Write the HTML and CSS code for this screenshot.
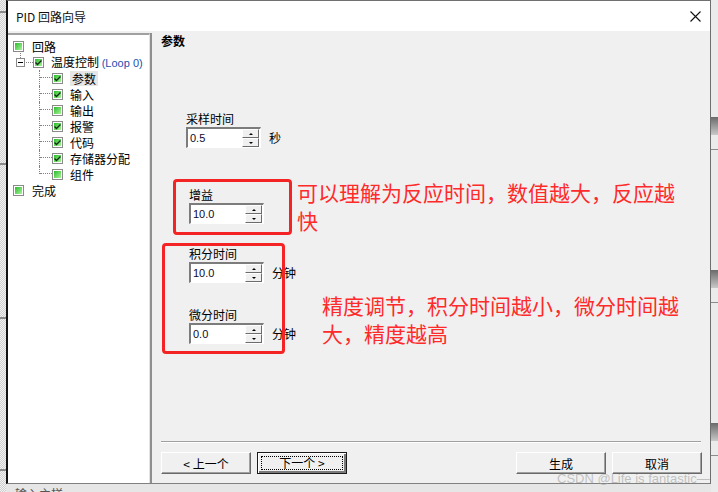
FILE: index.html
```html
<!DOCTYPE html>
<html lang="zh-CN">
<head>
    <meta charset="UTF-8">
    <title>PID 回路向导</title>
    <link rel="stylesheet" href="styles.css">
</head>
<body>
    <div class="desk">
        <!-- left screen edge -->
        <div class="edge-left">
            <i class="mark m1"></i>
            <i class="mark m2"></i>
            <i class="mark m3"></i>
            <i class="mark m4"></i>
        </div>

        <div class="main">
            <div class="window">
                <div class="titlebar">
                    <span class="title">PID 回路向导</span>
                    <svg class="close" width="11" height="11" viewBox="0 0 11 11">
                        <path d="M0.5 0.5 L10.5 10.5 M10.5 0.5 L0.5 10.5" stroke="#111" stroke-width="1.1" fill="none"/>
                    </svg>
                </div>

                <div class="body">
                    <!-- tree -->
                    <div class="tree">
                        <div class="row">
                            <span class="cb"></span><span class="txt">回路</span>
                        </div>
                        <div class="row lvl1">
                            <span class="exp"></span><span class="dash"></span>
                            <span class="cb on"><svg width="7" height="7" viewBox="0 0 7 7"><path d="M0.5 3.5 L2.5 5.5 L6.5 1.5" stroke="#143014" stroke-width="1.4" fill="none"/></svg></span>
                            <span class="txt">温度控制 <span class="loop">(Loop 0)</span></span>
                        </div>
                        <div class="row lvl2">
                            <span class="elbow"></span>
                            <span class="cb on"><svg width="7" height="7" viewBox="0 0 7 7"><path d="M0.5 3.5 L2.5 5.5 L6.5 1.5" stroke="#143014" stroke-width="1.4" fill="none"/></svg></span>
                            <span class="txt sel">参数</span>
                        </div>
                        <div class="row lvl2">
                            <span class="elbow"></span>
                            <span class="cb on"><svg width="7" height="7" viewBox="0 0 7 7"><path d="M0.5 3.5 L2.5 5.5 L6.5 1.5" stroke="#143014" stroke-width="1.4" fill="none"/></svg></span>
                            <span class="txt">输入</span>
                        </div>
                        <div class="row lvl2">
                            <span class="elbow"></span>
                            <span class="cb"></span>
                            <span class="txt">输出</span>
                        </div>
                        <div class="row lvl2">
                            <span class="elbow"></span>
                            <span class="cb on"><svg width="7" height="7" viewBox="0 0 7 7"><path d="M0.5 3.5 L2.5 5.5 L6.5 1.5" stroke="#143014" stroke-width="1.4" fill="none"/></svg></span>
                            <span class="txt">报警</span>
                        </div>
                        <div class="row lvl2">
                            <span class="elbow"></span>
                            <span class="cb on"><svg width="7" height="7" viewBox="0 0 7 7"><path d="M0.5 3.5 L2.5 5.5 L6.5 1.5" stroke="#143014" stroke-width="1.4" fill="none"/></svg></span>
                            <span class="txt">代码</span>
                        </div>
                        <div class="row lvl2">
                            <span class="elbow"></span>
                            <span class="cb on"><svg width="7" height="7" viewBox="0 0 7 7"><path d="M0.5 3.5 L2.5 5.5 L6.5 1.5" stroke="#143014" stroke-width="1.4" fill="none"/></svg></span>
                            <span class="txt">存储器分配</span>
                        </div>
                        <div class="row lvl2">
                            <span class="elbow last"></span>
                            <span class="cb"></span>
                            <span class="txt">组件</span>
                        </div>
                        <div class="row">
                            <span class="cb"></span><span class="txt">完成</span>
                        </div>
                    </div>

                    <!-- page -->
                    <div class="panel">
                        <div class="heading">参数</div>

                        <div class="fields">
                            <div class="field first">
                                <div class="label">采样时间</div>
                                <div class="line">
                                    <div class="spin">
                                        <span class="value">0.5</span>
                                        <span class="arrows"><b class="up"></b><b class="down"></b></span>
                                    </div>
                                    <span class="unit">秒</span>
                                </div>
                            </div>
                            <div class="field gain">
                                <div class="label">增益</div>
                                <div class="line">
                                    <div class="spin">
                                        <span class="value">10.0</span>
                                        <span class="arrows"><b class="up"></b><b class="down"></b></span>
                                    </div>
                                </div>
                            </div>
                            <div class="field integ">
                                <div class="label">积分时间</div>
                                <div class="line">
                                    <div class="spin">
                                        <span class="value">10.0</span>
                                        <span class="arrows"><b class="up"></b><b class="down"></b></span>
                                    </div>
                                    <span class="unit">分钟</span>
                                </div>
                            </div>
                            <div class="field deriv">
                                <div class="label">微分时间</div>
                                <div class="line">
                                    <div class="spin">
                                        <span class="value">0.0</span>
                                        <span class="arrows"><b class="up"></b><b class="down"></b></span>
                                    </div>
                                    <span class="unit">分钟</span>
                                </div>
                            </div>
                        </div>

                        <div class="sep"></div>
                        <div class="buttons">
                            <button class="btn">&lt; 上一个</button>
                            <button class="btn default"><span>下一个 &gt;</span></button>
                            <span class="grow"></span>
                            <button class="btn">生成</button>
                            <button class="btn">取消</button>
                        </div>

                        <!-- red annotations drawn over the dialog -->
                        <div class="note-box nb1"></div>
                        <div class="note-box nb2"></div>
                        <div class="note nt1">可以理解为反应时间，数值越大，反应越<br>快</div>
                        <div class="note nt2">精度调节，积分时间越小，微分时间越<br>大，精度越高</div>
                    </div>
                </div>
            </div>
            <div class="under">输入主样</div>
        </div>

        <!-- right screen edge -->
        <div class="edge-right">
            <i class="knob k1"></i><i class="rule"></i>
            <i class="knob k2"></i><i class="rule"></i>
            <i class="knob k3"></i><i class="rule"></i>
        </div>

        <div class="watermark">CSDN @Life is fantastic—</div>
    </div>
</body>
</html>
```

FILE: styles.css
```css
/* base */
body {
    margin: 0;
    font-family: "Noto Sans CJK SC", "Liberation Sans", sans-serif;
    font-size: 12px;
    color: #000;
}

.desk {
    position: relative;
    width: 718px;
    height: 492px;
    overflow: hidden;
    display: flex;
    background: #e6e6e6;
}

/* screen edges */
.edge-left {
    position: relative;
    width: 6px;
    flex: none;
    background: repeating-conic-gradient(#cfcfcf 0 25%, #f2f2f2 0 50%) 0 0 / 2px 2px;
}

.mark {
    position: absolute;
    left: 0;
    width: 6px;
    height: 2px;
    background: #8a8a8a;
}
.m1 { top: 11px; }
.m2 { top: 163px; }
.m3 { top: 317px; }
.m4 { top: 469px; }

.edge-right {
    width: 7px;
    flex: none;
    display: flex;
    flex-direction: column;
    background: #ebebeb;
}

.knob {
    height: 18px;
    background: linear-gradient(#6a6a6a, #c9c9c9);
}
.k1 { margin-top: 117px; }
.k2 { margin-top: 120px; }
.k3 { margin-top: 120px; }

.rule {
    height: 1px;
    margin-top: 14px;
    background: #8c8c8c;
}

.main {
    width: 705px;
    flex: none;
}

/* dialog */
.window {
    height: 482px;
    border-top: 1px solid #707070;
    border-bottom: 1px solid #808080;
    border-left: 2px solid #111;
    border-right: 1px solid #6e6e6e;
    background: #f0f0f0;
    display: flex;
    flex-direction: column;
}

.titlebar {
    height: 30px;
    flex: none;
    background: #fff;
    display: flex;
    align-items: center;
    justify-content: space-between;
    padding: 0 9px 0 8px;
}

.title {
    font-size: 12px;
    color: #111;
}

.close {
    display: block;
}

.body {
    flex: 1;
    display: flex;
    min-height: 0;
}

/* tree */
.tree {
    width: 141px;
    margin-top: 2px;
    padding-top: 3px;
    background: #fff;
    border-top: 2px solid #a0a0a0;
    border-right: 1px solid #e3e3e3;
    box-shadow: 2px 0 0 #8f8f8f;
    margin-right: 2px;
}

.row {
    height: 16px;
    display: flex;
    align-items: center;
    padding-left: 5px;
    white-space: nowrap;
}

.cb {
    width: 11px;
    height: 11px;
    box-sizing: border-box;
    border: 1px solid #8a8a8a;
    padding: 1px;
    flex: none;
    background: linear-gradient(135deg, #2cbc2c, #a8f29a) content-box, #fff;
    display: flex;
}

.cb svg {
    display: block;
}

.txt {
    margin-left: 8px;
    line-height: 15px;
}

.row.lvl1 {
    padding-left: 8px;
}

.row.lvl1 .txt,
.row.lvl2 .txt {
    margin-left: 7px;
}

.loop {
    font-family: "Liberation Sans", sans-serif;
    font-size: 11px;
    color: #1d4fae;
}

.exp {
    position: relative;
    width: 9px;
    height: 9px;
    box-sizing: border-box;
    border: 1px solid #8a8a8a;
    background: #fff;
    flex: none;
}

.exp::before {
    content: "";
    position: absolute;
    left: 3px;
    top: -6px;
    height: 5px;
    border-left: 1px dotted #808080;
}

.exp::after {
    content: "";
    position: absolute;
    left: 1px;
    top: 3px;
    width: 5px;
    height: 1px;
    background: #000;
}

.dash {
    width: 7px;
    margin-left: 1px;
    border-top: 1px dotted #808080;
    flex: none;
}

.row.lvl2 {
    padding-left: 31px;
    align-items: stretch;
}

.row.lvl2 .cb,
.row.lvl2 .txt {
    align-self: center;
}

.elbow {
    position: relative;
    width: 13px;
    flex: none;
    border-left: 1px dotted #808080;
    box-sizing: border-box;
}

.elbow.last {
    height: 8px;
}

.elbow::after {
    content: "";
    position: absolute;
    left: 0;
    top: 7px;
    width: 12px;
    border-top: 1px dotted #808080;
}

.txt.sel {
    background: #e6e6e6;
    padding: 0 2px;
    margin-left: 5px;
}

/* page */
.panel {
    position: relative;
    flex: 1;
    display: flex;
    flex-direction: column;
    padding: 2px 8px 9px 9px;
}

.heading {
    font-weight: bold;
    line-height: 16px;
}

.fields {
    display: flex;
    flex-direction: column;
}

.field {
    margin-left: 28px;
}

.field.first {
    margin-left: 25px;
    margin-top: 62px;
}
.field.gain { margin-top: 39px; }
.field.integ { margin-top: 22px; }
.field.deriv { margin-top: 24px; }

.label {
    line-height: 16px;
    height: 16px;
}

.line {
    display: flex;
    align-items: center;
}

.spin {
    width: 75px;
    height: 21px;
    box-sizing: border-box;
    display: flex;
    border: 2px solid;
    border-color: #7c7c7c #fff #fff #7c7c7c;
    border-right-width: 1px;
    border-bottom-width: 1px;
    background: #fff;
}

.value {
    flex: 1;
    padding-left: 2px;
    font-family: "Liberation Sans", sans-serif;
    font-size: 11px;
    line-height: 18px;
    color: #0a0a2a;
}

.arrows {
    width: 17px;
    display: flex;
    flex-direction: column;
    margin-right: 1px;
}

.arrows b {
    flex: 1;
    box-sizing: border-box;
    border: 1px solid;
    border-color: #fff #6c6c6c #6c6c6c #fff;
    background: #f0f0f0;
    display: flex;
    align-items: center;
    justify-content: center;
}

.arrows b::after {
    content: "";
    border-left: 2px solid transparent;
    border-right: 2px solid transparent;
}

.arrows .up::after {
    border-bottom: 2px solid #000;
}

.arrows .down::after {
    border-top: 2px solid #000;
}

.unit {
    margin-left: 8px;
}

.sep {
    margin-top: auto;
    margin-right: 1px;
    border-top: 1px solid #a0a0a0;
    border-bottom: 1px solid #fff;
}

.buttons {
    display: flex;
    margin-top: 9px;
    gap: 5px;
}

.grow {
    flex: 1;
}

.btn {
    width: 90px;
    height: 22px;
    padding: 0;
    font-family: "Noto Sans CJK SC", "Liberation Sans", sans-serif;
    font-size: 12px;
    color: #000;
    background: #f0f0f0;
    border: 1px solid;
    border-color: #fff #696969 #696969 #fff;
    box-shadow: inset -1px -1px 0 #a0a0a0;
}

.btn + .btn {
    margin-left: 1px;
}

.btn.default {
    border-color: #1a1a1a;
    box-shadow: inset 1px 1px 0 #fff, inset -2px -2px 0 #7a7a7a;
    display: flex;
    padding: 3px;
}

.btn.default span {
    flex: 1;
    border: 1px dotted #000;
    line-height: 12px;
    display: flex;
    align-items: center;
    justify-content: center;
}

/* annotations */
.note-box {
    position: absolute;
    border: 3px solid #f42424;
    border-radius: 4px;
    box-sizing: border-box;
}

.nb1 {
    left: 21px;
    top: 148px;
    width: 119px;
    height: 56px;
}

.nb2 {
    left: 10px;
    top: 212px;
    width: 123px;
    height: 111px;
}

.note {
    position: absolute;
    font-size: 21px;
    line-height: 28px;
    color: #ff2a2a;
    white-space: nowrap;
}

.nt1 {
    left: 145px;
    top: 147px;
}

.nt2 {
    left: 170px;
    top: 260px;
}

.under {
    padding-left: 9px;
    line-height: 16px;
    margin-top: 2px;
    color: #555;
}

.watermark {
    position: absolute;
    left: 557px;
    top: 471px;
    font-family: "Liberation Sans", sans-serif;
    font-size: 13px;
    line-height: 16px;
    color: rgba(160, 160, 160, 0.6);
}
```
